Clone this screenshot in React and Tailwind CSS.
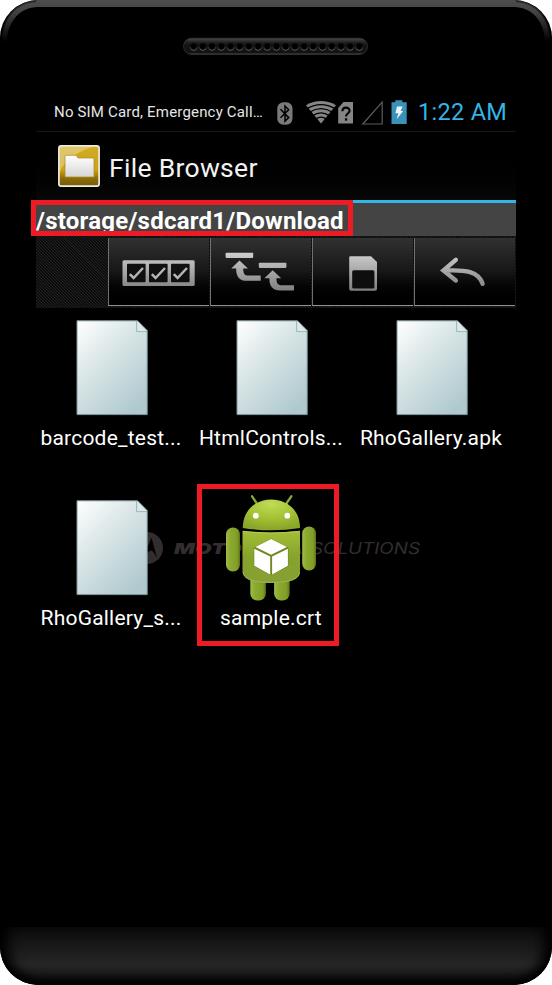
import React from "react";

const HOLES = Array.from({ length: 19 }, (_, i) => i);

function Speaker() {
  return (
    <svg width="186" height="20" viewBox="0 0 186 20">
      <defs>
        <linearGradient id="spk" x1="0" y1="0" x2="0" y2="1">
          <stop offset="0" stopColor="#4a4a4a" />
          <stop offset="0.25" stopColor="#222" />
          <stop offset="0.45" stopColor="#131313" />
          <stop offset="0.9" stopColor="#131313" />
          <stop offset="1" stopColor="#505050" />
        </linearGradient>
        <linearGradient id="hole" x1="0" y1="0" x2="0" y2="1">
          <stop offset="0.3" stopColor="#0a0a0a" />
          <stop offset="1" stopColor="#707070" />
        </linearGradient>
      </defs>
      <rect x="0.5" y="1.2" width="184" height="16.2" rx="8" fill="url(#spk)" stroke="#333" strokeWidth="0.8" />
      {HOLES.map((i) => (
        <circle key={i} cx={10.7 + i * 9.2} cy="9.8" r="3.5" fill="#000" stroke="url(#hole)" strokeWidth="0.9" />
      ))}
    </svg>
  );
}

function StatusIcons() {
  return (
    <svg width="134" height="28" viewBox="276 98 134 28" className="shrink-0">
      <rect x="277.3" y="101.3" width="15.2" height="22.4" rx="6.2" fill="#7a7a7a" />
      <path d="M280.5 108.3 288.7 116.6 285 120.3V105L288.7 108.7 280.5 116.8" fill="none" stroke="#000" strokeWidth="1.5" />
      <path d="M321 122.6 306 104.2Q321 95.8 336 104.2Z" fill="#858585" />
      <g fill="none" stroke="#000" strokeWidth="1.3">
        <path d="M307 107.6Q321 99.6 335 107.6" />
        <path d="M309.5 111.2Q321 104 332.5 111.2" />
        <path d="M312.5 114.8Q321 108.8 329.5 114.8" />
        <path d="M315.5 118.2Q321 114 326.5 118.2" />
      </g>
      <path d="M343.5 101H353V122.6H338.2V107Z" fill="#858585" />
      <path d="M342.4 110.2C342.4 105.4 349.6 105.6 349.6 109.8C349.6 112.4 346 112.6 346 115.4" fill="none" stroke="#000" strokeWidth="2.1" />
      <rect x="344.9" y="117.3" width="2.3" height="2.3" fill="#000" />
      <path d="M382.2 101.2V123H362.8Z" fill="none" stroke="#5c5c5c" strokeWidth="1.2" />
      <path d="M391.5 101.2H395.3V99.3H402.4V101.2H406.7V123H391.5Z" fill="#3a92b8" />
      <path d="M397 105.6H402.6L400.6 110H403.2L396.6 118.2L398.4 112.2H395.4Z" fill="#eef8fc" />
    </svg>
  );
}

function AppIcon() {
  return (
    <svg width="42" height="42" viewBox="0 0 42 42" className="shrink-0">
      <defs>
        <linearGradient id="gold" x1="0" y1="0" x2="0" y2="1">
          <stop offset="0" stopColor="#d2ac28" />
          <stop offset="0.6" stopColor="#cda312" />
          <stop offset="0.8" stopColor="#8f6e08" />
          <stop offset="1" stopColor="#74590a" />
        </linearGradient>
        <linearGradient id="fold" x1="0" y1="0" x2="0" y2="1">
          <stop offset="0" stopColor="#fff" />
          <stop offset="1" stopColor="#d6d6d6" />
        </linearGradient>
      </defs>
      <rect x="0.9" y="0.9" width="40.2" height="40.2" rx="2.4" fill="url(#gold)" stroke="#f0ede2" strokeWidth="1.7" />
      <path d="M2 2H34Q10 10 2 26Z" fill="#fff" opacity="0.32" />
      <path d="M7 32V11.5Q7 10.3 8 10.3H18L20 13H35Q36 13 36 14V32Z" fill="url(#fold)" stroke="#a98a28" strokeWidth="0.7" />
    </svg>
  );
}

function Grad() {
  return (
    <svg width="0" height="0" className="absolute">
      <defs>
        <linearGradient id="tool" gradientUnits="userSpaceOnUse" x1="0" y1="252" x2="0" y2="292">
          <stop offset="0" stopColor="#d0d0d0" />
          <stop offset="1" stopColor="#7c7c7c" />
        </linearGradient>
        <linearGradient id="page" x1="0" y1="0" x2="0.75" y2="1">
          <stop offset="0" stopColor="#ffffff" />
          <stop offset="0.45" stopColor="#d9e5e6" />
          <stop offset="1" stopColor="#b0c9cf" />
        </linearGradient>
        <linearGradient id="rim" gradientUnits="userSpaceOnUse" x1="0" y1="0" x2="0" y2="42">
          <stop offset="0" stopColor="#4d4d4d" />
          <stop offset="0.3" stopColor="#424242" />
          <stop offset="1" stopColor="#000" />
        </linearGradient>
      </defs>
    </svg>
  );
}

function Rim() {
  return (
    <svg width="552" height="44" viewBox="0 0 552 44" className="absolute left-0 top-0">
      <path d="M1.5 42C1.5 16 18 0 38 0H514C534 0 550.5 16 550.5 42L545 42C545 22 532 7 514 7H38C20 7 7 22 7 42Z" fill="url(#rim)" />
      <path d="M0.8 42C0.8 18 16 1 36 0.8M551.2 42C551.2 18 536 1 516 0.8" fill="none" stroke="#000" strokeWidth="3" opacity="0.45" />
    </svg>
  );
}

const box = (x) => (
  <g key={x}>
    <rect x={x} y="263.7" width="18.6" height="18.6" rx="0.8" fill="#101010" />
    <path d={`M${x + 2.8} 274.2 L${x + 6.6} 278 L${x + 16} 268`} fill="none" stroke="#b5b5b5" strokeWidth="2.5" />
  </g>
);

const TOOLS = [
  {
    vb: "109 239 101 66",
    art: (
      <>
        <rect x="122.5" y="260.2" width="72.2" height="25.8" rx="1.5" fill="url(#tool)" />
        {[127, 149, 171].map(box)}
      </>
    ),
  },
  {
    vb: "211 239 101 66",
    art: (
      <g fill="url(#tool)">
        <rect x="225.6" y="252.7" width="27.6" height="5.2" rx="0.8" />
        <rect x="258.8" y="262.7" width="27.6" height="5.2" rx="0.8" />
        <path d="M239.5 260.6L248 268.5H243.2C243.2 273.5 244.5 275.6 248.5 275.6H260.7V280.8H247C239.5 280.8 236 276.5 236.2 268.5H231.2Z" />
        <path d="M272.7 270.3L281.2 278.2H276.4C276.4 283 277.7 285.2 281.7 285.2H294V290.4H280.2C272.7 290.4 269.2 286.2 269.4 278.2H264.4Z" />
      </g>
    ),
  },
  {
    vb: "313 239 101 66",
    art: (
      <>
        <path d="M350.5 256.2H371L377 262V289Q377 290.8 375.2 290.8H351Q349.2 290.8 349.2 289V257.5Q349.2 256.2 350.5 256.2Z" fill="url(#tool)" />
        <rect x="352.2" y="270.3" width="22.2" height="18.2" rx="1.5" fill="#0e0e0e" />
      </>
    ),
  },
  {
    vb: "415 239 101 66",
    art: (
      <path d="M455.8 259.8L443.4 270.5L455.8 280.5M444.5 270.6C466 269.5 478.5 271.5 482.6 283.8" fill="none" stroke="url(#tool)" strokeWidth="4.4" strokeLinecap="round" strokeLinejoin="miter" />
    ),
  },
];

function PageIcon() {
  return (
    <svg width="74" height="96" viewBox="0 0 74 96">
      <path d="M2 0.8H62.5L72.2 10.5V94.6H2Z" fill="url(#page)" stroke="#7f989d" strokeWidth="1" />
      <path d="M61.6 1V11.6H72" fill="#dce8eb" stroke="#9ab6be" strokeWidth="1" />
    </svg>
  );
}

function AndroidIcon() {
  return (
    <svg width="96" height="112" viewBox="223.5 492 96 112">
      <defs>
        <linearGradient id="droid" x1="0" y1="0" x2="0" y2="1">
          <stop offset="0" stopColor="#a3bf35" />
          <stop offset="0.5" stopColor="#86a32c" />
          <stop offset="1" stopColor="#86a033" />
        </linearGradient>
        <radialGradient id="head" cx="0.5" cy="0.15" r="0.8">
          <stop offset="0" stopColor="#bfdc55" />
          <stop offset="0.6" stopColor="#a2c032" />
          <stop offset="1" stopColor="#8ba72b" />
        </radialGradient>
        <linearGradient id="limb" x1="0" y1="0" x2="1" y2="0">
          <stop offset="0" stopColor="#a0bb45" />
          <stop offset="0.3" stopColor="#8caa2e" />
          <stop offset="0.8" stopColor="#819d28" />
          <stop offset="1" stopColor="#5c7219" />
        </linearGradient>
      </defs>
      <path d="M252.6 496.3L257 503M291.8 496.3L287.2 503" stroke="#8fa936" strokeWidth="2.3" strokeLinecap="round" />
      <rect x="250.8" y="572" width="15.6" height="28.6" rx="7" fill="url(#limb)" />
      <rect x="274.6" y="572" width="15.6" height="28.6" rx="7" fill="url(#limb)" />
      <rect x="226.5" y="527.6" width="14" height="44" rx="6.8" fill="url(#limb)" />
      <rect x="302.7" y="526.4" width="13.8" height="44" rx="6.8" fill="url(#limb)" />
      <path d="M243.3 528C243.3 490 300.5 490 300.5 528Q272 532.5 243.3 528Z" fill="url(#head)" />
      <path d="M243 530.8Q272 534 300.5 530.8V572Q300 583 272 583Q243.5 583 243 572Z" fill="url(#droid)" />
      <path d="M243.5 531.4Q272 534.6 300 531.4" fill="none" stroke="#b9d25a" strokeWidth="0.8" />
      <path d="M243.6 572Q244 582.4 272 582.4Q300 582.4 300 572" fill="none" stroke="#a6ba62" strokeWidth="0.8" />
      <circle cx="256.3" cy="515.7" r="2.9" fill="#fff" />
      <circle cx="287.8" cy="515.7" r="2.9" fill="#fff" />
      <path d="M271.6 538.5L289 547.8V566.2L271.6 575.3L254.3 566.2V547.8Z" fill="#6f8724" />
      <path d="M271.6 539L287.4 547L271.6 554.8L256 547Z" fill="#fff" />
      <path d="M254.8 548.8L270.7 556.4V574.4L254.8 565.8Z" fill="#fff" />
      <path d="M288.4 548.8L272.6 556.4V574.4L288.4 565.8Z" fill="#fff" />
    </svg>
  );
}

function Watermark() {
  return (
    <div className="absolute left-[95px] top-[224px] flex h-8 w-[300px] items-center gap-[6px] text-[#322e2f]">
      <svg width="32" height="32" viewBox="0 0 32 32" className="shrink-0">
        <circle cx="16" cy="16" r="16" fill="#322e2f" />
        <path d="M6 26L11.5 5.5L16 16.5L20.5 5.5L26 26Q22 18.5 20.5 18.5Q18 18.5 16 22Q14 18.5 11.5 18.5Q10 18.5 6 26Z" fill="#000" />
      </svg>
      <svg width="260" height="24" viewBox="170 536 260 24" className="shrink-0 italic">
        <text x="175" y="553.5" fontSize="15" fontWeight="900" textLength="129" lengthAdjust="spacingAndGlyphs" fill="#322e2f" fontFamily="Inter, sans-serif">MOTOROLA</text>
        <text x="312" y="553.5" fontSize="15.5" textLength="109" lengthAdjust="spacingAndGlyphs" fill="#322e2f" fontFamily="Inter, sans-serif">SOLUTIONS</text>
      </svg>
    </div>
  );
}

const FILES = [
  { name: "barcode_test..." },
  { name: "HtmlControls..." },
  { name: "RhoGallery.apk" },
  { name: "RhoGallery_s..." },
  { name: "sample.crt", droid: true },
];

export default function App() {
  return (
    <div className="h-[985px] w-[552px] overflow-hidden bg-white font-[Roboto,sans-serif]">
      <Grad />
      <div className="relative flex h-[985px] flex-col overflow-hidden rounded-[38px] bg-black">
        <Rim />
        <div className="flex h-[93px] shrink-0 justify-center pt-[37px]">
          <Speaker />
        </div>

        <main className="relative mx-9 flex h-[834px] w-[480px] shrink-0 flex-col">
          <div className="flex h-[39px] shrink-0 items-center border-b border-[#171717] pl-[18px] pt-px">
            <span className="w-[222px] whitespace-nowrap text-[15px] tracking-[0.18px] text-[#e6e6e6]">No SIM Card, Emergency Call…</span>
            <StatusIcons />
            <span className="ml-[8px] whitespace-nowrap pt-px text-[23.5px] tracking-[0.3px] text-[#33b5e5]">1:22 AM</span>
          </div>

          <header className="flex h-[68px] shrink-0 items-center gap-[8px] bg-linear-to-b from-black to-[#070707] pl-[22px]">
            <AppIcon />
            <h1 className="whitespace-nowrap pl-px pt-[3px] text-[26.5px] tracking-[0.3px] text-[#f3f3f3]">File Browser</h1>
          </header>

          <div className="relative flex h-9 shrink-0 items-center overflow-hidden border-t-[3px] border-[#33b5e5] bg-[#444] pt-[3px]">
            <span className="whitespace-nowrap text-[24px] font-bold leading-9 tracking-[0.24px] text-white">/storage/sdcard1/Download</span>
          </div>

          <nav className="flex h-[72px] shrink-0 bg-[#111] bg-[repeating-linear-gradient(45deg,#0c0c0c_0_1.4px,#222_1.4px_2.1px)]">
            <div className="w-[72px] shrink-0" />
            {TOOLS.map((t) => (
              <div key={t.vb} className="flex h-[72px] w-[102px] flex-col pr-px pt-0.5">
                <button className="h-[68px] w-[101px] border-b border-l border-b-[#929292] border-l-[#707070] bg-linear-to-b from-[#313131] via-[#171717] to-black">
                  <svg width="101" height="66" viewBox={t.vb}>{t.art}</svg>
                </button>
              </div>
            ))}
          </nav>

          <section className="relative flex-1">
            <Watermark />
            <div className="relative grid grid-cols-[150px_150px_150px] gap-x-[10px]">
              {FILES.map((f) => (
                <div key={f.name} className="flex h-[180px] flex-col items-center">
                  <div className="flex h-[114px] shrink-0 items-end justify-center">
                    {f.droid ? (
                      <div className="h-[110px]"><AndroidIcon /></div>
                    ) : (
                      <div className="h-[102px] pl-px"><PageIcon /></div>
                    )}
                  </div>
                  <span className="mt-[2px] whitespace-nowrap text-[21px] leading-7 tracking-[0.22px] text-white">{f.name}</span>
                </div>
              ))}
            </div>
          </section>
        </main>

        <footer className="h-[58px] shrink-0 rounded-b-[38px] bg-linear-to-b from-[#0c0c0c] via-[#262626] via-65% to-[#101010] shadow-[inset_0_-9px_10px_-3px_#000,inset_14px_0_14px_-6px_#000,inset_-14px_0_14px_-6px_#000]" />

        <div className="absolute left-[31px] top-[200px] h-[36px] w-[322px] border-[5px] border-[#ed1c24]" />
        <div className="absolute left-[197px] top-[484px] h-[162px] w-[142px] border-[5px] border-[#ed1c24]" />
      </div>
    </div>
  );
}
